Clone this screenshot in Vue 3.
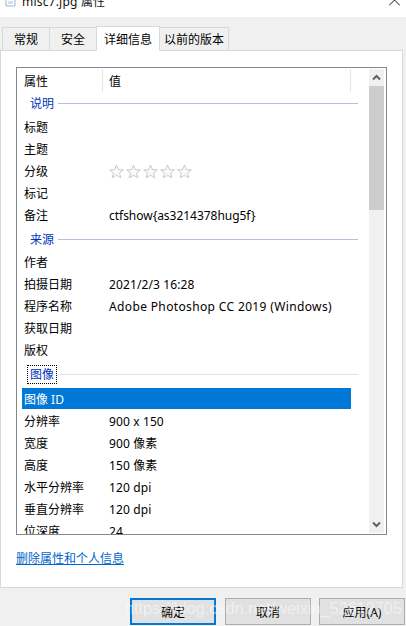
<script setup>
const tabs = [
  { name: '常规', w: 48 },
  { name: '安全', w: 48 },
  { name: '详细信息', w: 64, active: true },
  { name: '以前的版本', w: 70 }
]
const rows = [
  { group: '说明', h: 24, pt: 0, pb: 1 },
  { k: '标题' }, { k: '主题' }, { k: '分级', stars: true }, { k: '标记' },
  { k: '备注', v: 'ctfshow{as3214378hug5f}', ls: -0.03 },
  { group: '来源', h: 25, pt: 2, pb: 0 },
  { k: '作者' }, { k: '拍摄日期', v: '2021/2/3 16:28' },
  { k: '程序名称', v: 'Adobe Photoshop CC 2019 (Windows)', ls: 0.36 },
  { k: '获取日期' }, { k: '版权' },
  { group: '图像', h: 27, pt: 0, pb: 0, focus: true },
  { k: '图像 ID', selected: true },
  { k: '分辨率', v: '900 x 150' }, { k: '宽度', v: '900 像素' }, { k: '高度', v: '150 像素' },
  { k: '水平分辨率', v: '120 dpi' }, { k: '垂直分辨率', v: '120 dpi' }, { k: '位深度', v: '24' }
]
</script>

<template>
  <div class="dialog">
    <header class="title">
      <svg class="file" width="11" height="12" viewBox="0 0 11 12"><path d="M1 0V9H10V0" fill="#fff" stroke="#9fb4cc"/><path d="M3 4H8V7H3Z" fill="#cfe0f2"/></svg>
      <span class="title-text">misc7.jpg 属性</span>
      <svg class="close" width="11" height="7" viewBox="0 0 11 7"><path d="M0 6.5L5.5 1L11 6.5" fill="none" stroke="#111" stroke-width="1"/></svg>
    </header>
    <div class="tabs">
      <div v-for="t in tabs" :key="t.name" class="tab" :class="{ active: t.active }" :style="{ width: t.w + 'px' }">{{ t.name }}</div>
    </div>
    <main class="panel">
      <div class="list">
        <div class="content">
          <div class="head">
            <div class="hcell first">属性</div>
            <div class="hcell second">值</div>
          </div>
          <template v-for="r in rows" :key="r.k || r.group">
            <div v-if="r.group" class="group" :class="{ focused: r.focus }" :style="{ height: r.h + 'px', paddingTop: r.pt + 'px', paddingBottom: r.pb + 'px' }">
              <span class="group-label">{{ r.group }}</span>
              <span class="group-line"></span>
            </div>
            <div v-else class="row" :class="{ selected: r.selected }">
              <span class="key">{{ r.k }}</span>
              <span v-if="r.stars" class="stars">
                <svg v-for="i in 5" :key="i" width="15" height="15" viewBox="0 0 15 15"><path d="M7.5 1L9.4 5.6L14.3 5.9L10.5 9L11.8 13.8L7.5 11.2L3.2 13.8L4.5 9L.7 5.9L5.6 5.6Z" fill="#fafafa" stroke="#c9c9c9"/></svg>
              </span>
              <span v-else class="val" :style="r.ls !== undefined ? { letterSpacing: r.ls + 'px' } : null">{{ r.v }}</span>
            </div>
          </template>
        </div>
        <div class="scrollbar">
          <div class="arrow"><svg width="9" height="7" viewBox="0 0 9 7"><path d="M1 5.5L4.5 2L8 5.5" fill="none" stroke="#606060" stroke-width="2"/></svg></div>
          <div class="thumb"></div>
          <div class="track"></div>
          <div class="arrow"><svg width="9" height="7" viewBox="0 0 9 7"><path d="M1 1.5L4.5 5L8 1.5" fill="none" stroke="#606060" stroke-width="2"/></svg></div>
        </div>
      </div>
      <a class="link">删除属性和个人信息</a>
    </main>
    <footer class="footer">
      <button class="btn primary">确定</button>
      <button class="btn">取消</button>
      <button class="btn">应用(A)</button>
    </footer>
    <div class="watermark">https://blog.csdn.net/weixin_52612705</div>
  </div>
</template>

<style scoped>
.dialog {
  position: relative;
  width: 406px;
  height: 626px;
  overflow: hidden;
  background: #f0f0f0;
  color: #000;
  font-family: "Noto Sans", "Noto Sans CJK SC", sans-serif;
  font-size: 12px;
  display: flex;
  flex-direction: column;
}
.title {
  height: 17px;
  flex: none;
  background: #fff;
  display: flex;
  align-items: flex-start;
  overflow: hidden;
  padding: 0 5px;
}
.file { margin-top: -3px; flex: none; }
.title-text {
  margin: -8px 0 0 6px;
  font-size: 12px;
  line-height: 20px;
  letter-spacing: 0.2px;
  color: #111;
  white-space: nowrap;
}
.close { margin: 0 0 0 auto; flex: none; transform: translate(-1px, -1px); }
.tabs {
  height: 33px;
  flex: none;
  display: flex;
  align-items: flex-end;
  padding-left: 2px;
  position: relative;
  z-index: 1;
}
.tab {
  height: 23px;
  box-sizing: border-box;
  border: 1px solid #d9d9d9;
  border-bottom: 0;
  margin-right: -1px;
  display: flex;
  align-items: center;
  justify-content: center;
  background: #f0f0f0;
}
.tab.active {
  height: 25px;
  margin-bottom: -1px;
  background: #fff;
  position: relative;
}
.panel {
  flex: none;
  width: 403px;
  height: 538px;
  box-sizing: border-box;
  background: #fff;
  border: 1px solid #d9d9d9;
  padding: 16px 15px 0;
}
.list {
  width: 371px;
  height: 468px;
  box-sizing: border-box;
  border: 1px solid #828790;
  display: flex;
  overflow: hidden;
}
.content { width: 352px; flex: none; overflow: hidden; }
.head { height: 24px; display: flex; padding-top: 1px; box-sizing: border-box; }
.hcell {
  display: flex;
  align-items: center;
  box-sizing: border-box;
  border-right: 1px solid #e5e5e5;
}
.hcell.first { width: 86px; padding-left: 7px; }
.hcell.second { width: 248px; padding-left: 6px; }
.group {
  display: flex;
  align-items: center;
  box-sizing: border-box;
  padding-left: 13px;
  color: #0033bc;
  width: 341px;
}
.group-label { line-height: 17px; }
.group.focused .group-label {
  outline: 1px dotted #000;
  padding: 0 2px;
  margin-left: -2px;
}
.group-line { flex: 1; height: 1px; background: #b9c0dc; margin-left: 4px; }
.group.focused .group-line { background: #dfe3ef; margin-left: 2px; }
.row {
  height: 22px;
  margin-left: 5px;
  padding-left: 2px;
  width: 329px;
  box-sizing: border-box;
  display: flex;
  align-items: center;
}
.row.selected { background: #0078d7; color: #fff; height: 21px; margin-bottom: 1px; }
.key { width: 85px; flex: none; }
.val { white-space: nowrap; letter-spacing: 0.12px; }
.stars { display: flex; gap: 2px; }
.scrollbar {
  flex: none;
  width: 15px;
  margin: 1px 2px 1px 0;
  display: flex;
  flex-direction: column;
  background: #f0f0f0;
}
.arrow { height: 17px; display: flex; align-items: center; justify-content: center; flex: none; }
.thumb { height: 124px; background: #cdcdcd; flex: none; }
.track { flex: 1; }
.link {
  display: inline-block;
  margin-top: 14px;
  color: #0066cc;
  text-decoration: underline;
}
.footer {
  flex: 1;
  display: flex;
  align-items: flex-start;
  padding: 10px 0 0 130px;
  gap: 9px;
}
.btn {
  width: 86px;
  height: 27px;
  box-sizing: border-box;
  border: 1px solid #adadad;
  background: #e1e1e1;
  font: inherit;
  color: #000;
  padding: 0;
}
.btn.primary { border: 2px solid #0078d7; }
.btn + .btn + .btn { margin-left: -1px; }
.watermark {
  position: absolute;
  left: 125px;
  top: 598px;
  font-family: "Liberation Sans", sans-serif;
  font-size: 16.3px;
  line-height: 20px;
  color: rgba(255, 255, 255, 0.5);
  white-space: nowrap;
  pointer-events: none;
}
</style>
